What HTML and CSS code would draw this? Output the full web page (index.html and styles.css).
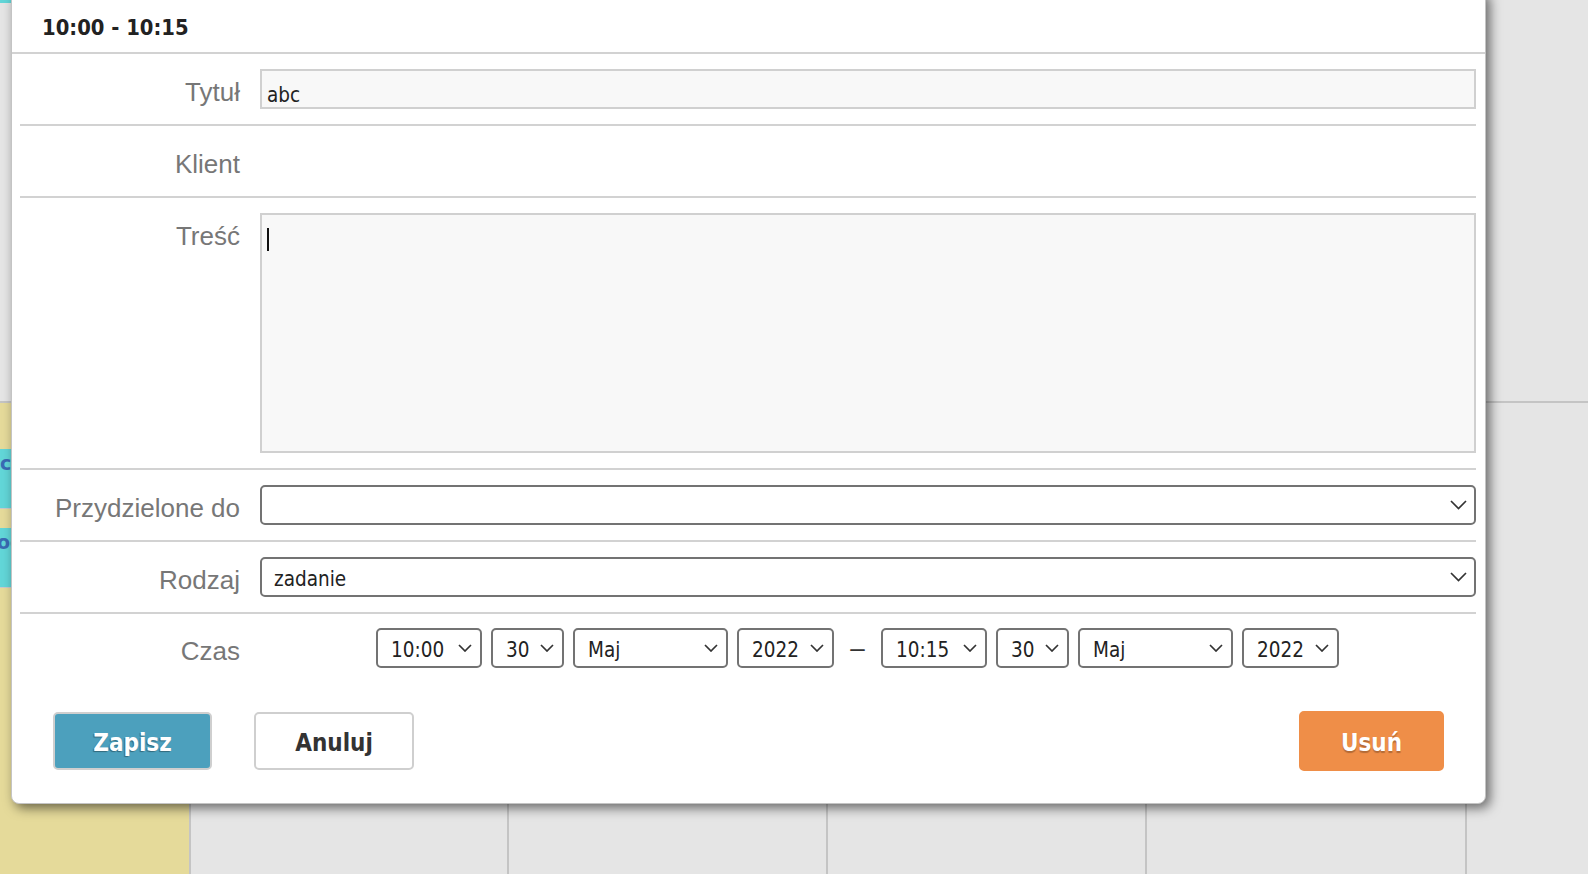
FILE: index.html
```html
<!DOCTYPE html>
<html lang="pl">
<head>
  <meta charset="UTF-8">
  <title>Zadanie 10:00 - 10:15</title>
  <link rel="stylesheet" href="styles.css">
</head>
<body>
  <div class="calendar">
    <div class="day today">
      <div class="off"><div class="event event-cut"></div></div>
      <div class="work">
        <div class="event event-a">c</div>
        <div class="event event-b">oc</div>
      </div>
    </div>
    <div class="day"><div class="off"></div><div class="work"></div></div>
    <div class="day"><div class="off"></div><div class="work"></div></div>
    <div class="day"><div class="off"></div><div class="work"></div></div>
    <div class="day"><div class="off"></div><div class="work"></div></div>
    <div class="day day-last"><div class="off"></div><div class="work"></div></div>
  </div>

  <div class="modal">
    <div class="modal-header">10:00 - 10:15</div>
    <div class="modal-body">
      <div class="form-row">
        <label>Tytuł</label>
        <div class="field"><div class="input">abc</div></div>
      </div>
      <div class="form-row">
        <label>Klient</label>
        <div class="field"></div>
      </div>
      <div class="form-row">
        <label>Treść</label>
        <div class="field"><div class="textarea"><span class="caret"></span></div></div>
      </div>
      <div class="form-row">
        <label>Przydzielone do</label>
        <div class="field">
          <div class="select select-wide">
            <span></span>
            <svg class="chevron-lg" viewBox="0 0 17 10"><polyline points="1,1 8.5,8.5 16,1"/></svg>
          </div>
        </div>
      </div>
      <div class="form-row">
        <label>Rodzaj</label>
        <div class="field">
          <div class="select select-wide">
            <span>zadanie</span>
            <svg class="chevron-lg" viewBox="0 0 17 10"><polyline points="1,1 8.5,8.5 16,1"/></svg>
          </div>
        </div>
      </div>
      <div class="form-row form-row-last">
        <label>Czas</label>
        <div class="field time-range">
          <div class="select sel-time"><span>10:00</span><svg class="chevron" viewBox="0 0 14 8"><polyline points="1,1 7,7 13,1"/></svg></div>
          <div class="select sel-day"><span>30</span><svg class="chevron" viewBox="0 0 14 8"><polyline points="1,1 7,7 13,1"/></svg></div>
          <div class="select sel-month"><span>Maj</span><svg class="chevron" viewBox="0 0 14 8"><polyline points="1,1 7,7 13,1"/></svg></div>
          <div class="select sel-year"><span>2022</span><svg class="chevron" viewBox="0 0 14 8"><polyline points="1,1 7,7 13,1"/></svg></div>
          <span class="dash">–</span>
          <div class="select sel-time"><span>10:15</span><svg class="chevron" viewBox="0 0 14 8"><polyline points="1,1 7,7 13,1"/></svg></div>
          <div class="select sel-day"><span>30</span><svg class="chevron" viewBox="0 0 14 8"><polyline points="1,1 7,7 13,1"/></svg></div>
          <div class="select sel-month"><span>Maj</span><svg class="chevron" viewBox="0 0 14 8"><polyline points="1,1 7,7 13,1"/></svg></div>
          <div class="select sel-year"><span>2022</span><svg class="chevron" viewBox="0 0 14 8"><polyline points="1,1 7,7 13,1"/></svg></div>
        </div>
      </div>
    </div>
    <div class="modal-footer">
      <button class="btn btn-save">Zapisz</button>
      <button class="btn btn-cancel">Anuluj</button>
      <button class="btn btn-delete">Usuń</button>
    </div>
  </div>
</body>
</html>
```

FILE: styles.css
```css
body {
  margin: 0;
  height: 874px;
  overflow: hidden;
  background: #e5e5e5;
  font-family: "Liberation Sans", Arial, sans-serif;
}

/* calendar behind the dialog */
.calendar {
  display: flex;
  height: 874px;
}
.day {
  width: 317px;
  border-right: 2px solid #c4c4c4;
  display: flex;
  flex-direction: column;
}
.day.today {
  width: 189px;
}
.day:nth-child(2) {
  width: 316px;
}
.day:nth-child(5) {
  width: 318px;
}
.day-last {
  flex: 1;
  border-right: none;
}
.off {
  height: 401px;
  background: #e5e5e5;
}
.work {
  flex: 1;
  border-top: 2px solid #c4c4c4;
  background: #e5e5e5;
}
.today .work {
  background: #e5da9a;
  padding-top: 46px;
}
.event {
  background: #62d6d8;
  color: #3a6ab4;
  font-family: "DejaVu Sans", sans-serif;
  font-weight: bold;
  font-size: 19px;
  line-height: 24px;
  height: 60px;
  padding-top: 2px;
  box-sizing: border-box;
  border-bottom: 1px solid #c9c9c9;
}
.event-b {
  margin-top: 19px;
  margin-left: -3px;
}
.event-cut {
  height: 3px;
  padding: 0;
  border: none;
}

/* dialog */
.modal {
  position: absolute;
  left: 11px;
  top: -10px;
  width: 1475px;
  box-sizing: border-box;
  background: #fff;
  border: 1px solid #c4c4c4;
  border-radius: 8px;
  box-shadow: 4px 4px 12px rgba(0,0,0,0.55);
}
.modal-header {
  padding: 25px 31px 12px 30px;
  border-bottom: 2px solid #d2d2d2;
  font-family: "DejaVu Sans Condensed", "DejaVu Sans", sans-serif;
  font-stretch: condensed;
  font-weight: bold;
  font-size: 21.8px;
  line-height: 24px;
  color: #222;
}
.modal-body {
  padding: 0 9px 0 8px;
}
.form-row {
  display: flex;
  gap: 20px;
  padding: 15px 0;
  border-bottom: 2px solid #d2d2d2;
}
.form-row-last {
  border-bottom: none;
  padding-top: 14px;
}
.form-row label {
  width: 220px;
  flex-shrink: 0;
  text-align: right;
  font-size: 26px;
  line-height: 46px;
  height: 40px;
  color: #777;
}
.field {
  flex: 1;
  min-height: 40px;
}

.input,
.textarea {
  box-sizing: border-box;
  background: #f8f8f8;
  border: 2px solid #d0d0d0;
  font-family: "DejaVu Sans Condensed", "DejaVu Sans", sans-serif;
  font-stretch: condensed;
  font-size: 20.5px;
  color: #222;
}
.input {
  height: 40px;
  line-height: 38px;
  padding: 5px 5px 0;
}
.textarea {
  height: 240px;
  padding: 13px 5px;
}
.caret {
  display: block;
  width: 2px;
  height: 23px;
  background: #111;
}

.select {
  display: flex;
  align-items: center;
  justify-content: space-between;
  height: 40px;
  box-sizing: border-box;
  border: 2px solid #737373;
  border-radius: 5px;
  background: #fff;
  padding: 0 8px 0 13px;
  font-family: "DejaVu Sans Condensed", "DejaVu Sans", sans-serif;
  font-stretch: condensed;
  font-size: 20.5px;
  color: #222;
}
.select span {
  padding-top: 3px;
}
.select-wide {
  padding: 0 7px 0 12px;
}
.select svg {
  fill: none;
  stroke: #333;
  stroke-width: 1.7;
}
.chevron {
  width: 14px;
  height: 8px;
}
.chevron-lg {
  width: 17px;
  height: 10px;
}

.time-range {
  display: flex;
  align-items: center;
  gap: 9px;
  padding-left: 116px;
}
.sel-time { width: 106px; }
.sel-day { width: 73px; }
.sel-month { width: 155px; }
.sel-year { width: 97px; }
.dash {
  width: 15px;
  margin: 0 7px;
  font-size: 26px;
  color: #333;
  text-align: center;
}

.modal-footer {
  display: flex;
  align-items: center;
  padding: 28px 41px 32px 41px;
}
.btn {
  height: 58px;
  box-sizing: border-box;
  padding-top: 4px;
  border: 2px solid #cfcfcf;
  border-radius: 5px;
  font-family: "DejaVu Sans Condensed", "DejaVu Sans", sans-serif;
  font-stretch: condensed;
  font-weight: bold;
  font-size: 24px;
  cursor: pointer;
}
.btn-save {
  width: 159px;
  background: #4ca0bd;
  color: #fff;
  text-shadow: -1px 1px 1px rgba(0,0,0,0.35);
}
.btn-cancel {
  width: 160px;
  margin-left: 42px;
  background: #fff;
  color: #333;
}
.btn-delete {
  width: 145px;
  height: 60px;
  margin-left: auto;
  background: #ef8e48;
  border-color: #ef8e48;
  color: #fff;
  text-shadow: 0 2px 1px rgba(0,0,0,0.25);
}
```
